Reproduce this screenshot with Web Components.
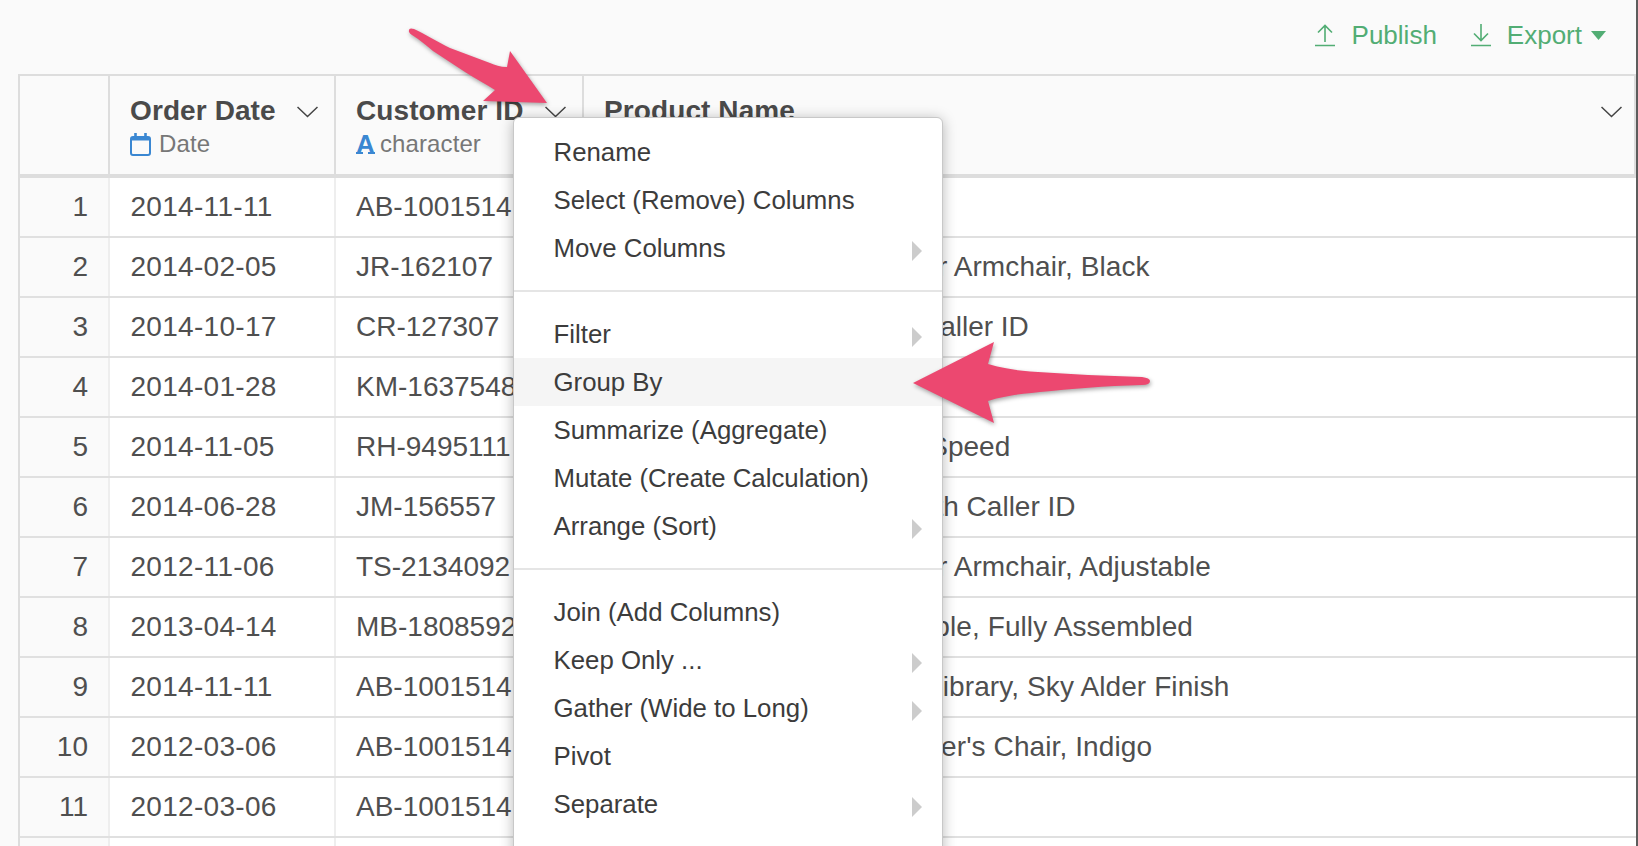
<!DOCTYPE html>
<html>
<head>
<meta charset="utf-8">
<title>Data grid</title>
<style>
  html, body { margin: 0; height: 846px; overflow: hidden; background: #fafafa; }
  body {
    font-family: "Liberation Sans", Arial, sans-serif;
    position: relative;
    box-sizing: border-box;
    border-right: 2px solid #5c5c5c;
  }
</style>
</head>
<body>
<top-bar></top-bar>
<data-table id="tabla">
  <col-head slot="head" pad="16"></col-head>
  <col-head slot="head" label="Order Date" type="date" pad="16"></col-head>
  <col-head slot="head" label="Customer ID" type="character" pad="16"></col-head>
  <col-head slot="head" label="Product Name" pad="12"></col-head>
</data-table>
<pop-menu>
  <menu-item>Rename</menu-item>
  <menu-item>Select (Remove) Columns</menu-item>
  <menu-item sub>Move Columns</menu-item>
  <menu-line></menu-line>
  <menu-item sub>Filter</menu-item>
  <menu-item active>Group By</menu-item>
  <menu-item>Summarize (Aggregate)</menu-item>
  <menu-item>Mutate (Create Calculation)</menu-item>
  <menu-item sub>Arrange (Sort)</menu-item>
  <menu-line></menu-line>
  <menu-item>Join (Add Columns)</menu-item>
  <menu-item sub>Keep Only ...</menu-item>
  <menu-item sub>Gather (Wide to Long)</menu-item>
  <menu-item>Pivot</menu-item>
  <menu-item sub>Separate</menu-item>
</pop-menu>
<note-arrows></note-arrows>

<script>
const COLUMNAS = '90px 226px 248px 1fr';

class TopBar extends HTMLElement {
    constructor() {
        super();
        this.attachShadow({ mode: 'open' });
        this.shadowRoot.innerHTML = `
            <style>
                :host {
                    display: flex;
                    justify-content: flex-end;
                    align-items: center;
                    box-sizing: border-box;
                    height: 74px;
                    padding: 0 30px 4px 0;
                    color: #52ad74;
                    font-size: 26px;
                }
                .accion { display: flex; align-items: center; gap: 17px; }
                .accion + .accion { margin-left: 34px; gap: 16px; }
                svg { display: block; }
                .export { display: flex; align-items: center; gap: 9px; }
            </style>
            <div class="accion">
                <svg width="20" height="23" viewBox="0 0 20 23" fill="none" stroke="currentColor" stroke-width="1.6">
                    <path d="M0 21.5H20M10 18V1.5M3 8.5L10 1.5L17 8.5"/>
                </svg>
                <span>Publish</span>
            </div>
            <div class="accion">
                <svg width="20" height="23" viewBox="0 0 20 23" fill="none" stroke="currentColor" stroke-width="1.6">
                    <path d="M0 21.5H20M10 0V16.5M3 9.5L10 16.5L17 9.5"/>
                </svg>
                <div class="export">
                    <span>Export</span>
                    <svg width="15" height="9" viewBox="0 0 15 9"><path d="M0 0H15L7.5 9Z" fill="currentColor"/></svg>
                </div>
            </div>
        `;
    }
}

class DataTable extends HTMLElement {
    constructor() {
        super();
        this.attachShadow({ mode: 'open' });
        this.shadowRoot.innerHTML = `
            <style>
                :host {
                    display: block;
                    box-sizing: border-box;
                    margin-left: 18px;
                    height: 772px;
                    overflow: hidden;
                    background: #fff;
                    border-top: 2px solid #ddd;
                    border-left: 2px solid #ddd;
                }
                .cabecera {
                    display: grid;
                    grid-template-columns: ${COLUMNAS};
                    box-sizing: border-box;
                    height: 102px;
                    background: #fafafa;
                    border-bottom: 4px solid #ddd;
                }
            </style>
            <div class="cabecera"><slot name="head"></slot></div>
            <slot></slot>
        `;
    }
}

class ColHead extends HTMLElement {
    constructor() {
        super();
        this.attachShadow({ mode: 'open' });
    }

    connectedCallback() {
        const titulo = this.getAttribute('label');
        const tipo = this.getAttribute('type');
        const pad = this.getAttribute('pad');
        let icono = '';
        if (tipo === 'date') {
            icono = `<svg width="21" height="23" viewBox="0 0 21 23" fill="none">
                <rect x="1" y="4" width="19" height="18" rx="2" stroke="#3a87d2" stroke-width="2"/>
                <path d="M1 4H20V7.5H1Z" fill="#3a87d2"/>
                <path d="M5.5 0V4M15.5 0V4" stroke="#3a87d2" stroke-width="2.6"/>
            </svg>`;
        } else if (tipo === 'character') {
            icono = `<span class="letra">A</span>`;
        }
        const textoTipo = tipo === 'date' ? 'Date' : tipo;
        this.shadowRoot.innerHTML = `
            <style>
                :host {
                    display: block;
                    box-sizing: border-box;
                    padding: 18px ${pad}px 0 20px;
                    border-right: 2px solid #ddd;
                    min-width: 0;
                }
                :host(:last-child) { border-right: 0; }
                .fila { display: flex; justify-content: space-between; align-items: center; height: 34px; }
                .titulo { font-size: 28px; font-weight: bold; color: #4a4a4a; letter-spacing: .1px; white-space: nowrap; }
                .chevron { flex: none; margin: 2px 0 0 auto; }
                .tipo {
                    display: flex;
                    align-items: center;
                    height: 30px;
                    margin-top: 1px;
                    font-size: 24px;
                    letter-spacing: .1px;
                    color: #777;
                    white-space: nowrap;
                }
                .tipo svg { margin-right: 8px; }
                .letra {
                    display: inline-block;
                    width: 19px;
                    height: 19px;
                    margin-right: 5px;
                    font: bold 26px/19px "Liberation Sans", sans-serif;
                    color: #3a87d2;
                    background:
                        linear-gradient(#3a87d2, #3a87d2) left bottom / 7px 2px no-repeat,
                        linear-gradient(#3a87d2, #3a87d2) right bottom / 7px 2px no-repeat;
                }
            </style>
            <div class="fila">
                ${titulo ? `<span class="titulo">${titulo}</span>` : ''}
                ${titulo ? `<svg class="chevron" width="21" height="12" viewBox="0 0 21 12" fill="none" stroke="#444" stroke-width="1.5"><path d="M0.5 1L10.5 10.5L20.5 1"/></svg>` : ''}
            </div>
            ${tipo ? `<div class="tipo">${icono}<span>${textoTipo}</span></div>` : ''}
        `;
    }
}

class GridRow extends HTMLElement {
    constructor() {
        super();
        this.attachShadow({ mode: 'open' });
    }

    connectedCallback() {
        const num = this.getAttribute('num') || '';
        const fecha = this.getAttribute('date') || '';
        const cliente = this.getAttribute('customer') || '';
        const producto = this.getAttribute('product') || '';
        // las cadenas largas quedan cortas con Liberation Sans
        const ajuste = producto.length > 40 ? 'largo' : '';
        this.shadowRoot.innerHTML = `
            <style>
                :host {
                    display: grid;
                    grid-template-columns: ${COLUMNAS};
                    box-sizing: border-box;
                    height: 60px;
                    border-bottom: 2px solid #e0e0e0;
                    font-size: 28px;
                    color: #4f4f4f;
                }
                div {
                    box-sizing: border-box;
                    padding: 0 20px;
                    line-height: 58px;
                    border-right: 2px solid #eee;
                    white-space: nowrap;
                    overflow: hidden;
                }
                .num { text-align: right; background: #fafafa; }
                .fecha { padding-left: 20.5px; letter-spacing: .3px; }
                .prod { border-right: 0; }
                .largo { letter-spacing: .1px; }
            </style>
            <div class="num">${num}</div>
            <div class="fecha">${fecha}</div>
            <div>${cliente}</div>
            <div class="prod ${ajuste}">${producto}</div>
        `;
    }
}

class PopMenu extends HTMLElement {
    constructor() {
        super();
        this.attachShadow({ mode: 'open' });
        this.shadowRoot.innerHTML = `
            <style>
                :host {
                    display: block;
                    position: absolute;
                    left: 513px;
                    top: 117px;
                    width: 430px;
                    height: 760px;
                    box-sizing: border-box;
                    padding-top: 10px;
                    background: #fff;
                    border: 1px solid #c8c8c8;
                    border-radius: 6px;
                    box-shadow: 0 2px 14px rgba(0, 0, 0, .28);
                }
            </style>
            <slot></slot>
        `;
    }
}

class MenuItem extends HTMLElement {
    constructor() {
        super();
        this.attachShadow({ mode: 'open' });
        this.shadowRoot.innerHTML = `
            <style>
                :host {
                    display: flex;
                    justify-content: space-between;
                    align-items: center;
                    box-sizing: border-box;
                    height: 48px;
                    padding: 0 20px 0 39.5px;
                    font-size: 25.8px;
                    color: #3c3c3c;
                    white-space: nowrap;
                }
                :host([active]) { background: #f5f5f5; }
                .flecha { display: none; margin-top: 5px; }
                :host([sub]) .flecha { display: block; }
            </style>
            <slot></slot>
            <svg class="flecha" width="10" height="20" viewBox="0 0 10 20"><path d="M0 0L10 10L0 20Z" fill="#ccc"/></svg>
        `;
    }
}

class MenuLine extends HTMLElement {
    constructor() {
        super();
        this.attachShadow({ mode: 'open' });
        this.shadowRoot.innerHTML = `
            <style>
                :host {
                    display: block;
                    height: 2px;
                    margin: 18px 0;
                    background: #e5e5e5;
                }
            </style>
        `;
    }
}

class NoteArrows extends HTMLElement {
    constructor() {
        super();
        this.attachShadow({ mode: 'open' });
        this.shadowRoot.innerHTML = `
            <style>
                :host { display: block; position: absolute; left: 0; top: 0; pointer-events: none; }
                svg { display: block; }
                path { fill: #ec4870; filter: drop-shadow(1px 2px 2px rgba(0, 0, 0, .35)); }
            </style>
            <svg width="1636" height="846" viewBox="0 0 1636 846">
                <path d="M547 103L510 51L507 67C500 67 495 65 490 63L450 48C438 42 425 34 414 29Q408 27 409 32Q410 34 412 35C420 40 426 45 433 51L465 72C476 79 486 84 495 90L483 101Z"/>
                <path d="M913 383L994 342L988 364C1005 369 1020 371 1038 372C1070 374 1105 376 1142 377Q1150 378 1150 381Q1150 385 1142 385C1105 386 1070 389 1040 392C1020 394 1003 396 988 401L994 423Z"/>
            </svg>
        `;
    }
}

customElements.define('top-bar', TopBar);
customElements.define('data-table', DataTable);
customElements.define('col-head', ColHead);
customElements.define('grid-row', GridRow);
customElements.define('pop-menu', PopMenu);
customElements.define('menu-item', MenuItem);
customElements.define('menu-line', MenuLine);
customElements.define('note-arrows', NoteArrows);

const filas = [
    ['2014-11-11', 'AB-1001514', ''],
    ['2014-02-05', 'JR-162107', 'Novimex Executive Leather Armchair, Black'],
    ['2014-10-17', 'CR-127307', 'Nokia Smart Phone, with Caller ID'],
    ['2014-01-28', 'KM-1637548', ''],
    ['2014-11-05', 'RH-9495111', 'Sharp Fax Machine, High-Speed'],
    ['2014-06-28', 'JM-156557', 'Samsung Smart Phone, with Caller ID'],
    ['2012-11-06', 'TS-2134092', 'Novimex Executive Leather Armchair, Adjustable'],
    ['2013-04-14', 'MB-1808592', 'Chromcraft Conference Table, Fully Assembled'],
    ['2014-11-11', 'AB-1001514', 'Sauder Facets Collection Library, Sky Alder Finish'],
    ['2012-03-06', 'AB-1001514', 'Global Push Button Manager\'s Chair, Indigo'],
    ['2012-03-06', 'AB-1001514', ''],
    ['', '', '']
];

const tabla = document.getElementById('tabla');
filas.forEach((f, i) => {
    const fila = document.createElement('grid-row');
    if (f[0]) fila.setAttribute('num', i + 1);
    fila.setAttribute('date', f[0]);
    fila.setAttribute('customer', f[1]);
    fila.setAttribute('product', f[2]);
    tabla.appendChild(fila);
});
</script>
</body>
</html>
